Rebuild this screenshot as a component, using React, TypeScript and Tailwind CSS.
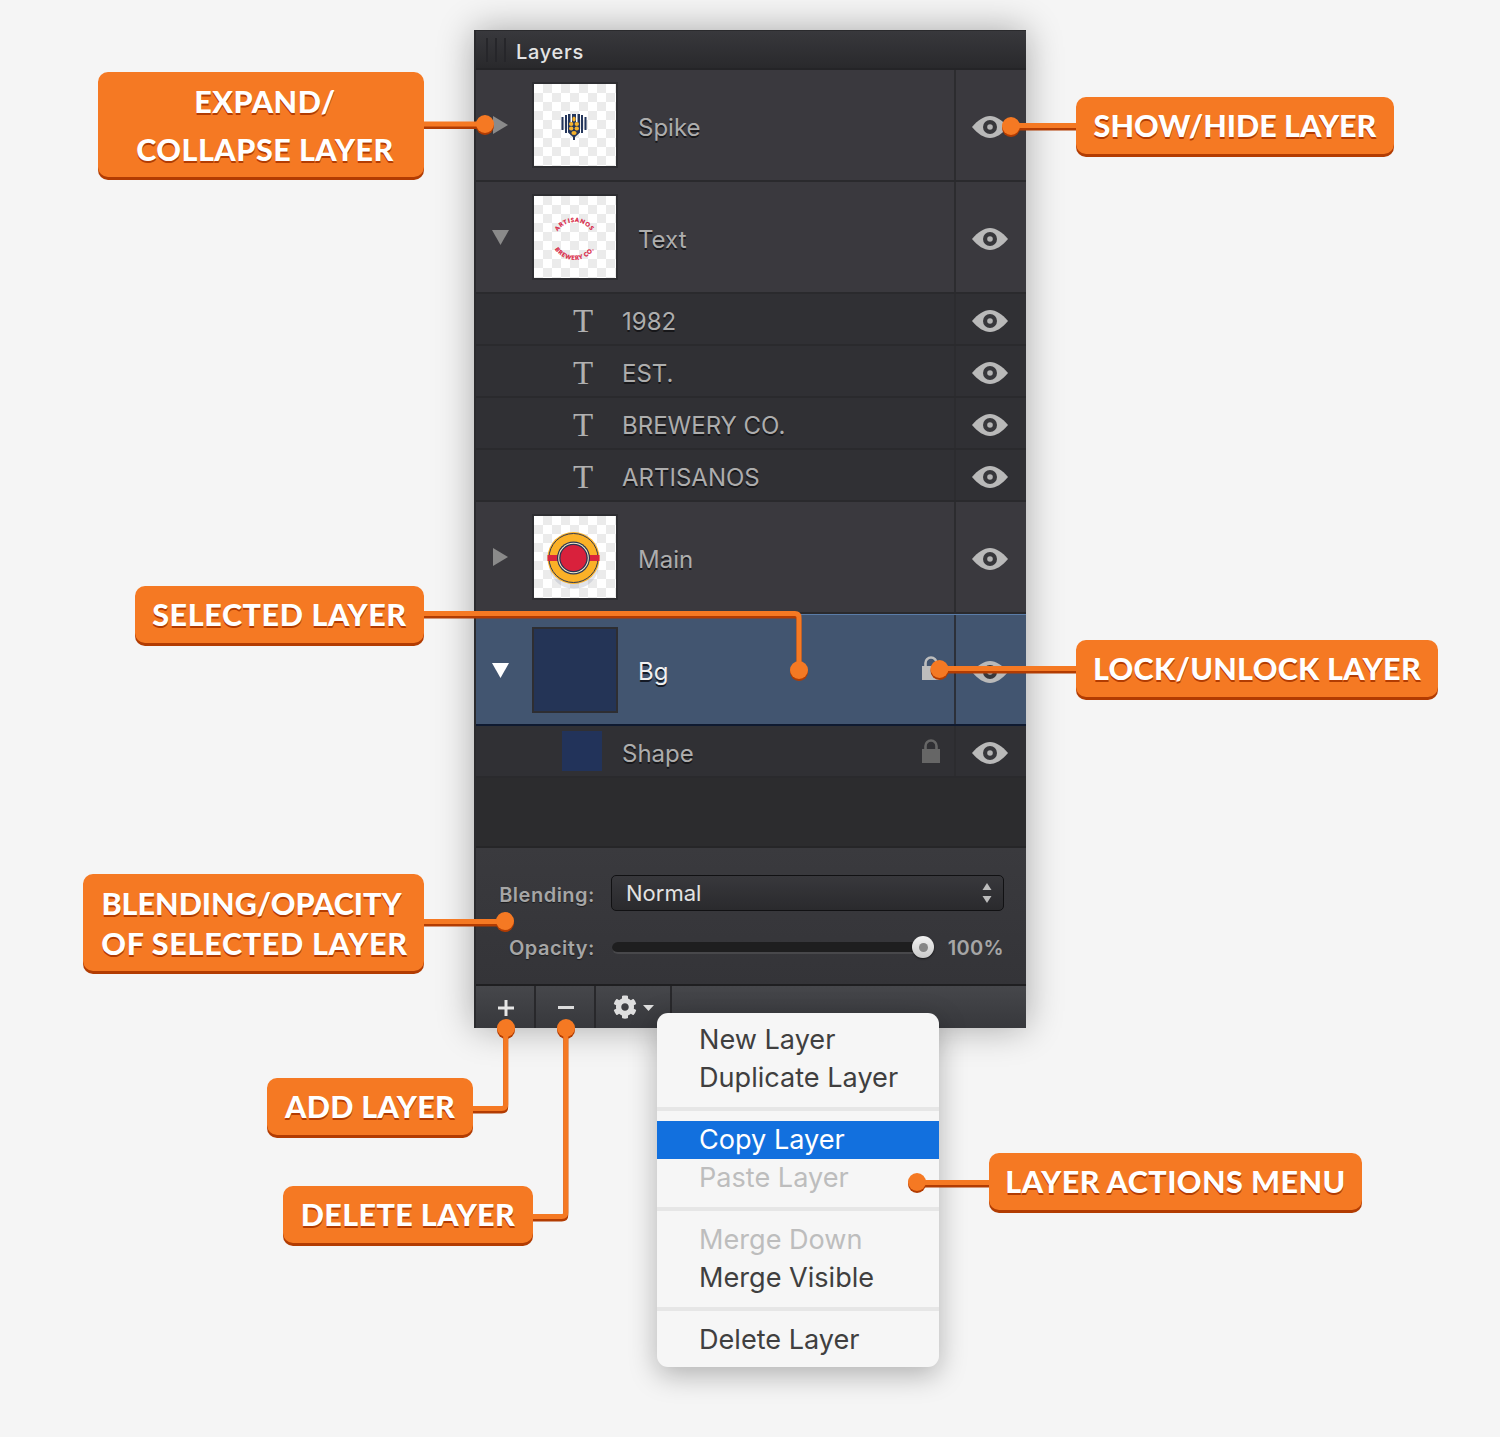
import { FaCog } from "react-icons/fa";

const nameShadow = "[text-shadow:0_2px_0_#17171a]";

function Eye() {
  return (
    <svg width="36" height="22" viewBox="0 0 36 22" className="block">
      <path d="M0 11C6 4 12 0 18 0s12 4 18 11c-6 7-12 11-18 11S6 18 0 11Z" fill="#b9b9b9" />
      <circle cx="18" cy="11" r="7" fill="#37373b" />
      <circle cx="18" cy="11" r="2.800" fill="#b4b4b4" />
    </svg>
  );
}

function Lock({ color }: { color: string }) {
  return (
    <svg width="18" height="24" viewBox="0 0 18 24" className="block">
      <path d="M3.500 11V7a5.500 5.500 0 0 1 11 0v4" fill="none" stroke={color} strokeWidth="2.600" />
      <rect x="0" y="10" width="18" height="14" fill={color} />
    </svg>
  );
}

function Tri({ dir, color }: { dir: "right" | "down"; color: string }) {
  return dir === "right" ? (
    <svg width="16" height="18" viewBox="0 0 16 18" className="block"><path d="M1 0 16 9 1 18Z" fill={color} /></svg>
  ) : (
    <svg width="17" height="16" viewBox="0 0 17 16" className="block mt-[2px]"><path d="M0 0H17L8.500 15Z" fill={color} /></svg>
  );
}

function Checker({ children }: { children?: React.ReactNode }) {
  return (
    <div className="w-[86px] h-[86px] border-2 border-[#2e2e32] bg-white bg-[conic-gradient(#ebebeb_25%,#ffffff_0_50%,#ebebeb_0_75%,#ffffff_0)] bg-[length:18px_18px] flex items-center justify-center shrink-0">
      {children}
    </div>
  );
}

function Wheat() {
  return (
    <svg width="82" height="82" viewBox="1 -1 82 82" className="block">
      <g fill="#24365c">
        <rect x="28.500" y="32" width="2" height="13" />
        <rect x="32" y="30" width="2" height="18" />
        <path d="M35 29H47V47.500L42 52V55H40V52L35 47.500Z" />
        <rect x="48" y="30" width="2" height="18" />
        <rect x="51.500" y="32" width="2" height="13" />
      </g>
      <rect x="37.500" y="29" width="1.500" height="8" fill="#ffffff" />
      <rect x="43" y="29" width="1.500" height="8" fill="#ffffff" />
      <g fill="#f5b22c">
        <ellipse cx="41" cy="34" rx="1.700" ry="2.600" />
        <ellipse cx="38.200" cy="39" rx="2.200" ry="2" />
        <ellipse cx="43.800" cy="39" rx="2.200" ry="2" />
        <ellipse cx="38.200" cy="43.500" rx="2.200" ry="2" />
        <ellipse cx="43.800" cy="43.500" rx="2.200" ry="2" />
        <ellipse cx="41" cy="48" rx="2.600" ry="1.900" />
      </g>
    </svg>
  );
}

function Badge() {
  return (
    <svg width="82" height="82" viewBox="0 0 82 82" className="block">
      <path id="arc-top" d="M20.500 46A20 20 0 0 1 60.500 46" fill="none" />
      <path id="arc-bottom" d="M17.500 41A23 23 0 0 0 63.500 41" fill="none" />
      <text fontFamily="Lato, sans-serif" fontWeight="900" fontSize="5.800" letterSpacing="0.800" fill="#d8213f" stroke="#d8213f" strokeWidth="0.200">
        <textPath href="#arc-top" startOffset="50%" textAnchor="middle">ARTISANOS</textPath>
      </text>
      <text fontFamily="Lato, sans-serif" fontWeight="900" fontSize="5.800" letterSpacing="0.700" fill="#d8213f" stroke="#d8213f" strokeWidth="0.200">
        <textPath href="#arc-bottom" startOffset="50%" textAnchor="middle">BREWERY CO.</textPath>
      </text>
    </svg>
  );
}

function MainLogo() {
  return (
    <svg width="82" height="82" viewBox="0 0 82 82" className="block">
      <ellipse cx="40" cy="48" rx="25" ry="25" fill="#8d93ad" opacity="0.250" />
      <circle cx="39.500" cy="42" r="26" fill="#fbb127" />
      <circle cx="39.500" cy="42" r="24.500" fill="none" stroke="#2f3a55" strokeWidth="1" />
      <rect x="13.500" y="39" width="52" height="6" fill="#d9243d" />
      <circle cx="39.500" cy="42" r="16.500" fill="#2a3553" />
      <circle cx="39.500" cy="42" r="15.300" fill="#f6eecb" />
      <circle cx="39.500" cy="42" r="14.300" fill="#2a3553" />
      <circle cx="39.500" cy="42" r="13" fill="#d9213c" />
    </svg>
  );
}

function BigRow({
  name,
  dir,
  triColor,
  thumb,
}: {
  name: string;
  dir: "right" | "down";
  triColor: string;
  thumb: React.ReactNode;
}) {
  return (
    <div className="flex h-[112px] border-b-2 border-[#2a2a2d] bg-[#3a393e]">
      <div className="flex items-center w-[480px] border-r-2 border-[#2c2c2f]">
        <div className="w-14 pl-4 flex items-center"><Tri dir={dir} color={triColor} /></div>
        <Checker>{thumb}</Checker>
        <span className={`ml-5 pt-[6px] text-[24px] text-[#adadad] ${nameShadow}`}>{name}</span>
      </div>
      <div className="flex-1 flex items-center justify-center mt-1 pr-[2px]"><Eye /></div>
    </div>
  );
}

function TextRow({ name }: { name: string }) {
  return (
    <div className="flex h-[52px] border-b-2 border-[#2a2a2d] bg-[#303034]">
      <div className="flex items-center w-[480px] border-r-2 border-[#2c2c2f]">
        <span className="ml-[87px] pt-1 w-10 text-center font-['Liberation_Serif',serif] text-[33px] leading-none text-[#b0b0b0]">T</span>
        <span className={`ml-[19px] pt-[6px] text-[24px] text-[#adadad] ${nameShadow}`}>{name}</span>
      </div>
      <div className="flex-1 flex items-center justify-center mt-1 pr-[2px]"><Eye /></div>
    </div>
  );
}

function Callout({ className, children }: { className: string; children: React.ReactNode }) {
  return (
    <div
      className={`absolute z-30 flex items-center justify-center text-center rounded-[10px] bg-[#f57923] shadow-[0_3px_0_#b23c02] font-['Lato',sans-serif] font-black text-white text-[30.500px] [text-shadow:0_2px_0_#b23c02] whitespace-nowrap ${className}`}
    >
      {children}
    </div>
  );
}

function Leader({ d, cx, cy }: { d: string; cx: number; cy: number }) {
  return (
    <g>
      <path d={d} transform="translate(0 2.500)" fill="none" stroke="#b23c02" strokeWidth="5" />
      <circle cx={cx} cy={cy + 2} r="9" fill="#b23c02" />
      <path d={d} fill="none" stroke="#f57923" strokeWidth="5" />
      <circle cx={cx} cy={cy} r="9" fill="#f57923" />
    </g>
  );
}

function MenuItem({ label, tone }: { label: string; tone?: "on" | "off" }) {
  const cls =
    tone === "on"
      ? "bg-[#1270de] text-white"
      : tone === "off"
        ? "text-[#bdbdbd]"
        : "text-[#403f3f]";
  return <div className={`h-[38px] pl-[42px] flex items-center text-[27.100px] ${cls}`}>{label}</div>;
}

function MenuSep() {
  return <div className="h-1 my-[10px] bg-[#e6e6e6]" />;
}

export default function App() {
  return (
    <div className="relative w-[1500px] h-[1437px] overflow-hidden bg-[#f5f5f5] pt-[30px] pl-[474px] font-['Inter',sans-serif]">
      <div className="w-[552px] h-[998px] flex flex-col border-l-2 border-[#2b2b2e] bg-[#2c2c2e] shadow-[0_0_34px_rgba(0,0,0,0.32)]">
        <div className="h-10 shrink-0 flex items-center bg-gradient-to-b from-[#38383c] to-[#29292c] border-t border-[#2a2a2d] border-b-2 border-b-[#242427]">
          <div className="flex gap-[7px] ml-[10px]">
            <div className="w-[2px] h-6 bg-[#26262a]" />
            <div className="w-[2px] h-6 bg-[#26262a]" />
            <div className="w-[2px] h-6 bg-[#26262a]" />
          </div>
          <span className="ml-[10px] pt-1 text-[20px] font-medium tracking-[0.7px] text-[#e4e4e4]">Layers</span>
        </div>

        <BigRow name="Spike" dir="right" triColor="#8a8a8a" thumb={<Wheat />} />
        <BigRow name="Text" dir="down" triColor="#8a8a8a" thumb={<Badge />} />
        <TextRow name="1982" />
        <TextRow name="EST." />
        <TextRow name="BREWERY CO." />
        <TextRow name="ARTISANOS" />
        <BigRow name="Main" dir="right" triColor="#8a8a8a" thumb={<MainLogo />} />

        <div className="flex h-[112px] border-b-2 border-[#0f1a30] border-t border-t-[#5a7ca8] bg-[#425570]">
          <div className="flex items-center w-[480px] border-r-2 border-[#2c3039]">
            <div className="w-14 pl-4 flex items-center"><Tri dir="down" color="#ffffff" /></div>
            <div className="w-[86px] h-[86px] shrink-0 border-2 border-[#2e2e32] bg-[#243456]" />
            <span className="ml-5 pt-1 text-[24px] text-[#f0f0f0] [text-shadow:0_2px_0_#141a26]">Bg</span>
            <div className="ml-auto mr-[14px] -mt-1"><Lock color="#bdbdbd" /></div>
          </div>
          <div className="flex-1 flex items-center justify-center mt-1 pr-[2px]"><Eye /></div>
        </div>

        <div className="flex h-[52px] border-b-2 border-[#2a2a2d] bg-[#303034]">
          <div className="flex items-center w-[480px] border-r-2 border-[#2c2c2f]">
            <div className="ml-[86px] w-10 h-10 bg-[#22335a]" />
            <span className={`ml-5 pt-[6px] text-[24px] text-[#adadad] ${nameShadow}`}>Shape</span>
            <div className="ml-auto mr-[14px]"><Lock color="#666666" /></div>
          </div>
          <div className="flex-1 flex items-center justify-center mt-1 pr-[2px]"><Eye /></div>
        </div>

        <div className="h-[70px] shrink-0 bg-[#2c2c2e] border-b-2 border-[#262628]" />

        <div className="h-[136px] shrink-0 bg-gradient-to-b from-[#3a3a3e] to-[#343438] pt-[27px] pr-[22px]">
          <div className="flex items-center h-9">
            <span className="w-[119px] pt-1 text-right text-[20px] font-semibold tracking-[0.5px] text-[#a6a6a6] [text-shadow:0_1px_1px_#1c1c1e]">Blending:</span>
            <div className="ml-4 flex-1 h-9 flex items-center justify-between rounded-[5px] border border-[#111113] bg-gradient-to-b from-[#38383c] to-[#2a2a2d] pl-[14px] pr-[11px]">
              <span className="text-[22px] text-[#e2e2e2]">Normal</span>
              <svg width="10" height="24" viewBox="0 0 10 24" className="block">
                <path d="M5 2 9.500 9H.5Z" fill="#bdbdbd" />
                <path d="M.5 15H9.500L5 22Z" fill="#bdbdbd" />
              </svg>
            </div>
          </div>
          <div className="flex items-center h-6 mt-[25px]">
            <span className="w-[119px] text-right text-[20px] font-semibold tracking-[0.5px] text-[#a6a6a6] [text-shadow:0_1px_1px_#1c1c1e]">Opacity:</span>
            <div className="relative ml-[17px] w-[316px] h-3 rounded-full bg-[#1e1e1f] border-b-2 border-[#48484b]">
              <div className="absolute -right-[6px] top-[-6px] w-[22px] h-[22px] rounded-full bg-gradient-to-b from-[#f2f2f2] to-[#c9c9c9] shadow-[0_1px_2px_rgba(0,0,0,0.6)] flex items-center justify-center">
                <div className="w-[9px] h-[9px] rounded-full bg-[#858585]" />
              </div>
            </div>
            <span className="ml-auto text-[20px] font-semibold tracking-[0.3px] text-[#a6a6a6]">100%</span>
          </div>
        </div>

        <div className="flex-1 flex border-t-2 border-[#1f1f21] bg-gradient-to-b from-[#46474b] to-[#37383c]">
          <div className="w-[60px] flex justify-center pt-[14px] pl-[1px] border-r-2 border-[#28282b]">
            <svg width="16" height="16" viewBox="0 0 16 16" className="block"><path d="M6.500 0h3v6.500H16v3H9.500V16h-3V9.500H0v-3h6.500Z" fill="#e6e6e6" /></svg>
          </div>
          <div className="w-[60px] flex justify-center pt-[20px] pl-[1px] border-r-2 border-[#28282b]">
            <div className="w-4 h-[3px] bg-[#dcdcdc]" />
          </div>
          <div className="w-[76px] flex items-start pl-[17px] pt-[9px] gap-[6px] border-r-2 border-[#28282b]">
            <FaCog className="w-6 h-6 text-[#dedede]" />
            <svg width="11" height="6" viewBox="0 0 11 6" className="block mt-[10px]"><path d="M0 0h11L5.500 6Z" fill="#dedede" /></svg>
          </div>
        </div>
      </div>

      <div className="absolute z-10 left-[657px] top-[1013px] w-[282px] h-[354px] pt-2 rounded-[11px] bg-[#f6f6f6] shadow-[0_8px_28px_rgba(0,0,0,0.28)]">
        <MenuItem label="New Layer" />
        <MenuItem label="Duplicate Layer" />
        <MenuSep />
        <MenuItem label="Copy Layer" tone="on" />
        <MenuItem label="Paste Layer" tone="off" />
        <MenuSep />
        <MenuItem label="Merge Down" tone="off" />
        <MenuItem label="Merge Visible" />
        <MenuSep />
        <MenuItem label="Delete Layer" />
      </div>

      <svg width="1500" height="1437" viewBox="0 0 1500 1437" className="absolute left-0 top-0 z-20 pointer-events-none">
        <Leader d="M424 124H485" cx={485} cy={124} />
        <Leader d="M1011 125.500H1076" cx={1011} cy={126} />
        <Leader d="M424 613.500H795Q799 613.500 799 617.500V670" cx={799} cy={670} />
        <Leader d="M939 668.500H1076" cx={939.500} cy={669} />
        <Leader d="M424 921.500H505" cx={505} cy={921} />
        <Leader d="M505.700 1028V1104.500Q505.700 1108.500 501.700 1108.500H473" cx={506} cy={1028} />
        <Leader d="M565.800 1028V1212.500Q565.800 1216.500 561.800 1216.500H533" cx={566} cy={1028} />
        <Leader d="M917 1182.500H989" cx={917} cy={1182} />
      </svg>

      <Callout className="left-[98px] top-[72px] w-[326px] h-[105px] leading-[48px] pl-2 tracking-[0.5px]">
        <div>EXPAND/<br />COLLAPSE LAYER</div>
      </Callout>
      <Callout className="left-[1076px] top-[97px] w-[318px] h-[57px]">SHOW/HIDE LAYER</Callout>
      <Callout className="left-[135px] top-[586px] w-[289px] h-[57px] tracking-[0.6px]">SELECTED LAYER</Callout>
      <Callout className="left-[1076px] top-[640px] w-[362px] h-[57px] tracking-[0.3px]">LOCK/UNLOCK LAYER</Callout>
      <Callout className="left-[83px] top-[874px] w-[341px] h-[97px] leading-[40px] pr-1">
        <div>BLENDING/OPACITY<br /><span className="ml-[6px] tracking-[0.7px]">OF SELECTED LAYER</span></div>
      </Callout>
      <Callout className="left-[267px] top-[1078px] w-[206px] h-[57px] tracking-[0.3px]">ADD LAYER</Callout>
      <Callout className="left-[283px] top-[1186px] w-[250px] h-[57px] tracking-[0.4px]">DELETE LAYER</Callout>
      <Callout className="left-[989px] top-[1153px] w-[373px] h-[57px] tracking-[0.45px]">LAYER ACTIONS MENU</Callout>
    </div>
  );
}
